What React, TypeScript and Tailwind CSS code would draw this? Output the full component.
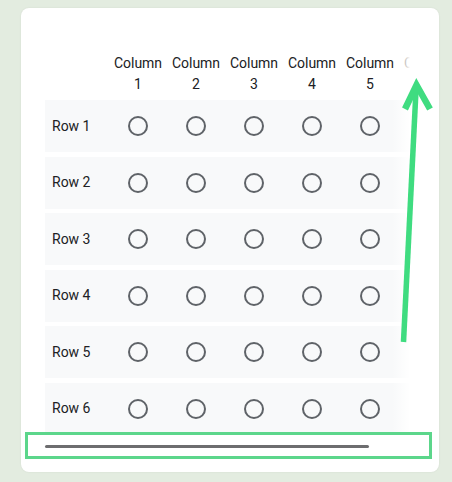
import React from 'react';

const columns = ['Column 1', 'Column 2', 'Column 3', 'Column 4', 'Column 5', 'Column 6'];
const rows = ['Row 1', 'Row 2', 'Row 3', 'Row 4', 'Row 5', 'Row 6'];

function Radio() {
  return <span className="block w-[20px] h-[20px] rounded-full border-2 border-[#5f6368]" />;
}

export default function App() {
  return (
    <div
      className="relative w-[452px] h-[482px] bg-[#e3ece0] pt-[8px] pl-[21px] overflow-hidden"
      style={{ fontFamily: 'Roboto, "Noto Sans", Arial, sans-serif' }}
    >
      <div className="w-[418px] h-[464px] bg-white rounded-[8px] shadow-[0_0_2px_rgba(0,0,0,0.08)] pt-[45px] pl-[24px] pr-[29px]">
        {/* grid, scrolled horizontally */}
        <div className="relative w-[365px] overflow-hidden">
          <div className="w-[412px]">
            <div className="flex items-end h-[42px] mb-[5px]">
              <div className="w-[64px] shrink-0" />
              {columns.map((c) => (
                <div
                  key={c}
                  className="w-[58px] shrink-0 px-[3px] text-center text-[14px] leading-[21px] text-[#202124]"
                >
                  {c}
                </div>
              ))}
            </div>
            <div className="flex flex-col gap-[4.5px]">
              {rows.map((r) => (
                <div key={r} className="flex items-center h-[52px] bg-[#f8f9fa]">
                  <div className="w-[64px] shrink-0 pl-[7px] text-[14px] text-[#202124]">{r}</div>
                  {columns.map((c) => (
                    <div key={c} className="w-[58px] shrink-0 flex justify-center">
                      <Radio />
                    </div>
                  ))}
                </div>
              ))}
            </div>
          </div>
          {/* right edge fade */}
          <div className="absolute top-0 right-0 h-full w-[18px] bg-gradient-to-r from-white/0 to-white" />
        </div>
        {/* horizontal scroll indicator */}
        <div className="mt-[10px] w-[365px] h-[3px]">
          <div className="w-[324px] h-[3px] rounded-full bg-[#6d6d6f]" />
        </div>
      </div>

      {/* annotation: highlighted scrollbar */}
      <div className="absolute left-[25px] top-[432px] w-[407px] h-[27px] border-[3px] border-[#5cd68b]" />

      {/* annotation: arrow */}
      <svg className="absolute left-0 top-0" width="452" height="482" viewBox="0 0 452 482">
        <line x1="403.5" y1="342" x2="416" y2="90" stroke="#3fdc80" strokeWidth="5.5" />
        <polyline
          points="405,109 416.5,85 430,109"
          fill="none"
          stroke="#3fdc80"
          strokeWidth="6.5"
          strokeLinejoin="miter"
        />
      </svg>
    </div>
  );
}
